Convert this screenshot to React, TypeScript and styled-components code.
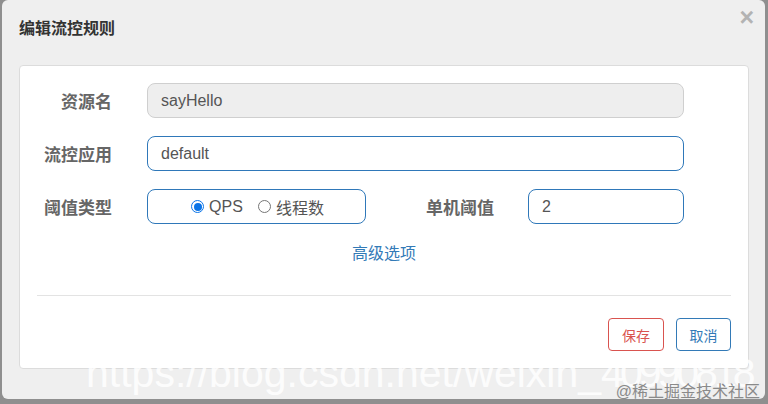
import React from 'react'
import styled, { createGlobalStyle } from 'styled-components'

const Global = createGlobalStyle`
  html, body {
    margin: 0;
    padding: 0;
    background: #8f8f8f;
    font-family: "Liberation Sans", "Noto Sans CJK SC", sans-serif;
  }
`

const Page = styled.div`
  width: 768px;
  height: 404px;
  padding: 0 3px 5px 2px;
  box-sizing: border-box;
  overflow: hidden;
`

const Modal = styled.div`
  position: relative;
  height: 399px;
  background: #efefef;
  border-radius: 6px;
  overflow: hidden;
  display: flex;
  flex-direction: column;
`

const Header = styled.div`
  height: 65px;
  display: flex;
  justify-content: space-between;
  align-items: flex-start;
  padding: 0 11px 0 17px;
  box-sizing: border-box;
`

const Title = styled.h4`
  margin: 19px 0 0;
  font-size: 16px;
  line-height: 20px;
  font-weight: bold;
  color: #333;
`

const Close = styled.span`
  margin-top: 5px;
  font-size: 25px;
  line-height: 25px;
  font-weight: bold;
  color: #b3b3b3;
`

const Card = styled.div`
  margin: 0 16px 0 17px;
  height: 304px;
  box-sizing: border-box;
  background: #fff;
  border: 1px solid #dcdcdc;
  border-radius: 4px;
  display: flex;
  flex-direction: column;
  padding-top: 17px;
`

const Row = styled.div`
  display: flex;
  align-items: center;
  padding-right: 64px;
  margin-bottom: 18px;
`

const Label = styled.label<{ $w: number; $gap?: number }>`
  width: ${p => p.$w}px;
  flex: none;
  text-align: right;
  font-size: 17px;
  font-weight: bold;
  color: #666;
  margin-right: ${p => p.$gap ?? 35}px;
`

const Input = styled.div<{ $disabled?: boolean; $w?: number }>`
  ${p => (p.$w ? `width: ${p.$w}px; flex: none;` : 'flex: 1;')}
  height: 35px;
  box-sizing: border-box;
  border: 1px solid ${p => (p.$disabled ? '#cfcfcf' : '#2f78b9')};
  background: ${p => (p.$disabled ? '#eee' : '#fff')};
  border-radius: 8px;
  padding: 0 13px;
  display: flex;
  align-items: center;
  font-size: 16px;
  color: #555;
`

const RadioBox = styled.div`
  width: 219px;
  flex: none;
  height: 35px;
  box-sizing: border-box;
  border: 1px solid #2f78b9;
  border-radius: 8px;
  display: flex;
  align-items: center;
  justify-content: center;
  gap: 15px;
  padding-left: 2px;
  font-size: 16px;
  color: #555;
`

const RadioItem = styled.span`
  display: flex;
  align-items: center;
  gap: 5px;
`

const Dot = styled.span<{ $on?: boolean }>`
  width: 13px;
  height: 13px;
  box-sizing: border-box;
  border-radius: 50%;
  border: ${p => (p.$on ? '1px solid #0a74e8' : '1px solid #767676')};
  display: flex;
  align-items: center;
  justify-content: center;
  &::after {
    content: '';
    display: ${p => (p.$on ? 'block' : 'none')};
    width: 8px;
    height: 8px;
    border-radius: 50%;
    background: #0a74e8;
  }
`

const More = styled.a`
  align-self: center;
  margin-top: 1px;
  font-size: 16px;
  line-height: 22px;
  color: #337ab7;
  text-decoration: none;
`

const Divider = styled.hr`
  margin: 30px 17px 0;
  border: 0;
  border-top: 1px solid #e3e3e3;
`

const Footer = styled.div`
  display: flex;
  justify-content: flex-end;
  gap: 12px;
  padding: 22px 17px 0;
`

const Button = styled.button<{ $color: string; $w: number }>`
  width: ${p => p.$w}px;
  height: 33px;
  background: #fff;
  border: 1px solid ${p => p.$color};
  color: ${p => p.$color};
  border-radius: 4px;
  font-size: 14px;
  font-family: inherit;
  padding: 0;
`

const Watermark = styled.div`
  position: absolute;
  left: 84px;
  top: 350px;
  font-size: 41px;
  color: rgba(255, 255, 255, 0.85);
  white-space: nowrap;
  pointer-events: none;
`

const Digits = styled.span`
  letter-spacing: -4px;
`

const Credit = styled.div`
  position: absolute;
  right: 5px;
  top: 378px;
  font-size: 16px;
  color: #8a8a8a;
  white-space: nowrap;
`

export default function App() {
  return (
    <Page>
      <Global />
      <Modal>
        <Header>
          <Title>编辑流控规则</Title>
          <Close>×</Close>
        </Header>
        <Card>
          <Row>
            <Label $w={92}>资源名</Label>
            <Input $disabled>sayHello</Input>
          </Row>
          <Row>
            <Label $w={92}>流控应用</Label>
            <Input>default</Input>
          </Row>
          <Row>
            <Label $w={92}>阈值类型</Label>
            <RadioBox>
              <RadioItem>
                <Dot $on />
                QPS
              </RadioItem>
              <RadioItem>
                <Dot />
                线程数
              </RadioItem>
            </RadioBox>
            <Label $w={128} $gap={34}>单机阈值</Label>
            <Input $w={156}>2</Input>
          </Row>
          <More href="#">高级选项</More>
          <Divider />
          <Footer>
            <Button $color="#d9534f" $w={56}>保存</Button>
            <Button $color="#337ab7" $w={55}>取消</Button>
          </Footer>
        </Card>
        <Watermark>
          https://blog.csdn.net/weixin_<Digits>40990818</Digits>
        </Watermark>
        <Credit>@稀土掘金技术社区</Credit>
      </Modal>
    </Page>
  )
}
